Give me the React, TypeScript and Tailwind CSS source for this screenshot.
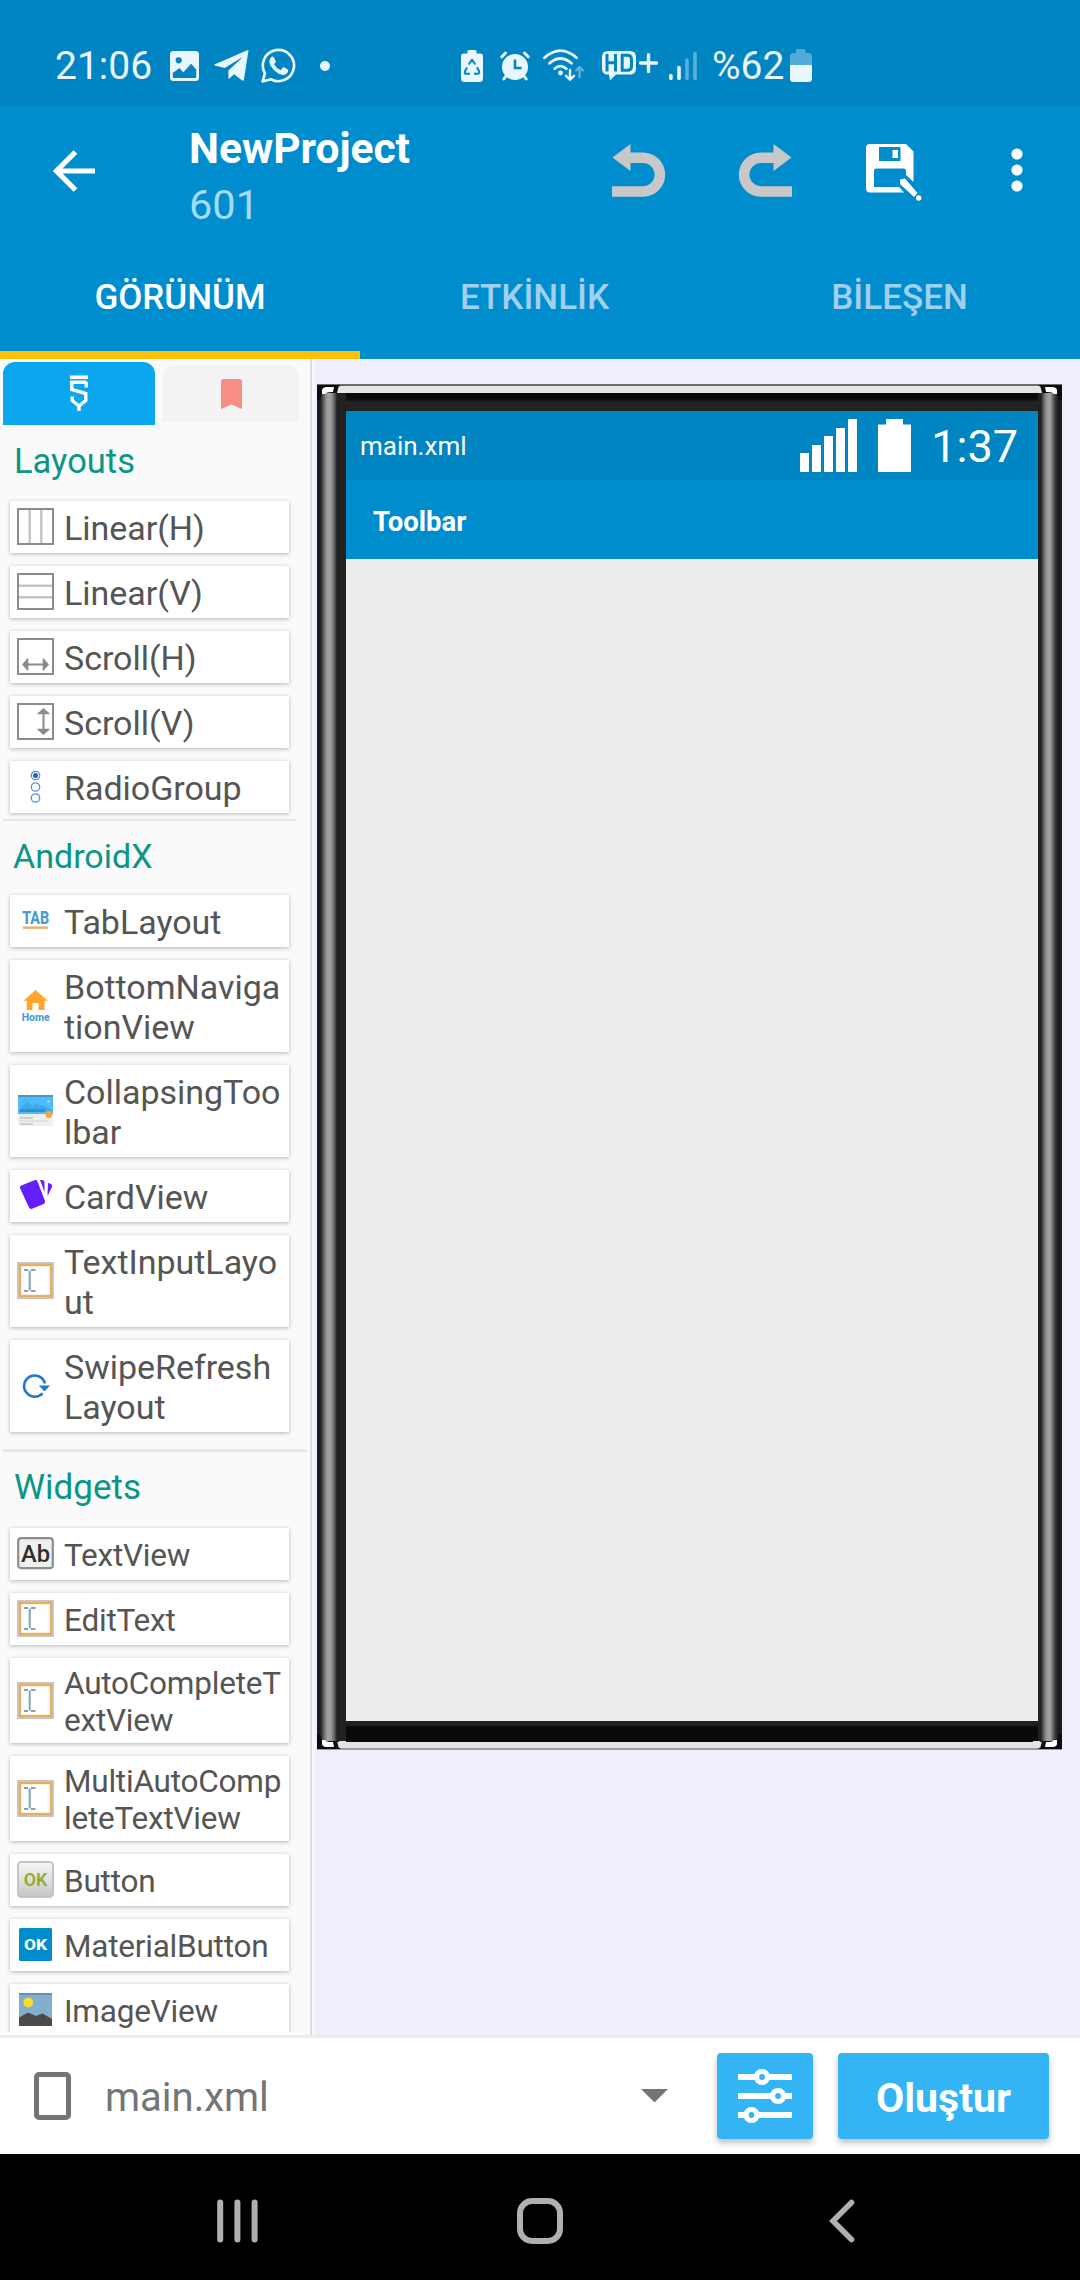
import React from "react";
import type { ReactNode } from "react";

/* ---------- status bar icons ---------- */

const PictureIcon = () => (
  <svg width="29" height="30" viewBox="0 0 29 30">
    <path fillRule="evenodd" fill="#eaf6fd" d="M3.500 0H25.500Q29 0 29 3.500V26.500Q29 30 25.500 30H3.500Q0 30 0 26.500V3.500Q0 0 3.500 0ZM8.700 6.200A3.100 3.100 0 1 0 8.700 12.400A3.100 3.100 0 1 0 8.700 6.200ZM2.800 22V26.200Q2.800 27 3.600 27H25.400Q26.200 27 26.200 26.200V18.500L21 12.800L13.300 21.500L9.500 17Z" />
  </svg>
);

const TelegramIcon = () => (
  <svg width="35" height="31" viewBox="0 0 35 31">
    <path fill="#eaf6fd" d="M34.500 .5L29.800 30.200Q29.300 31 28.300 30.400L20 24.200L15.400 28.600Q14.500 29.200 14.400 28V20.600L27.300 8.400Q27.900 7.600 26.900 8L10.800 18L1 15.500Q-.3 14.900 1 14.200L33.300 .2Q34.400 -.2 34.500 .5Z" />
  </svg>
);

const WhatsappIcon = () => (
  <svg width="35" height="35" viewBox="0 0 35 35">
    <path d="M1.600 33.500L3.900 25.300A15.600 15.600 0 1 1 9.900 31.200Z" fill="none" stroke="#eaf6fd" strokeWidth="2.700" strokeLinejoin="round" />
    <path fill="#eaf6fd" d="M10 9.300Q11.600 7.800 12.900 9.200L14.800 13.300Q15 14.500 13.100 16.300Q15.200 20.300 19.400 22.100Q20.100 22.200 21.900 19.600Q22.600 19.100 23.500 19.600L27 21.500Q27.500 22 27 23.700Q25.800 26.800 21.900 26.900Q17.500 26.400 13.600 22.700Q8.700 17.600 8.400 13.700Q8.500 11 10 9.300Z" />
  </svg>
);

const RecycleBatteryIcon = () => (
  <svg width="22" height="32" viewBox="0 0 22 32">
    <path fill="#eaf6fd" d="M6.500 1.500Q6.500 0 8 0H14Q15.500 0 15.500 1.500V3.500H19Q22 3.500 22 6.500V28.500Q22 32 18.500 32H3.500Q0 32 0 28.500V6.500Q0 3.500 3 3.500H6.500Z" />
    <path d="M7.700 14.500L11 9.700L14.300 14.500M16 17.200L18.200 21.500Q18.600 23.800 16.500 23.800H13M9 23.800H5Q3.200 23.500 4 21.300L6 17.500" fill="none" stroke="#0084c2" strokeWidth="2" strokeLinejoin="round" />
  </svg>
);

const AlarmIcon = () => (
  <svg width="30" height="30" viewBox="0 0 30 30">
    <g stroke="#eaf6fd" strokeWidth="3" strokeLinecap="round">
      <path d="M1.800 5.800L5.500 2M28.200 5.800L24.500 2M3.800 28L7 23.500M26.200 28L23 23.500" />
    </g>
    <circle cx="15" cy="16" r="13" fill="#eaf6fd" />
    <path d="M15 8.500V17H21.500" fill="none" stroke="#0084c2" strokeWidth="2.600" />
  </svg>
);

const WifiIcon = () => (
  <svg width="42" height="33" viewBox="0 0 42 33">
    <g fill="none" stroke="#eaf6fd" strokeWidth="2.800" strokeLinecap="round">
      <path d="M1.500 8.800Q17.500 -5.500 33.500 8.800" />
      <path d="M6.500 14.300Q17.500 4.800 28.500 14.300" />
      <path d="M11.600 19.700Q17.500 14.600 23.400 19.700" />
      <path d="M27 21V30M23 26.800L27 30.600L31 26.800" strokeWidth="2.400" />
    </g>
    <circle cx="17.500" cy="24" r="2.400" fill="#eaf6fd" />
    <path d="M36.500 29V19M32.500 22L36.500 18.200L40.500 22" fill="none" stroke="#5fb3dc" strokeWidth="2.400" />
  </svg>
);

const HdIcon = () => (
  <svg width="56" height="32" viewBox="0 0 56 32">
    <path fill="#eaf6fd" d="M6 1H28Q34 1 34 7V18.500Q34 24.500 28 24.500H14L8 30.500L7 24.500H6Q0 24.500 0 18.500V7Q0 1 6 1Z" />
    <g fill="none" stroke="#0084c2" strokeWidth="3">
      <path d="M5 4V21.500M13.500 4V21.500M5 12.700H13.500" />
      <path d="M20.200 5.200H25.500Q29.500 5.200 29.500 9.500V16Q29.500 20.300 25.500 20.300H20.200Z" />
    </g>
    <path d="M38.500 13H54.500M46.500 4.800V21.500" stroke="#eaf6fd" strokeWidth="3.400" strokeLinecap="round" />
  </svg>
);

const CellIcon = () => (
  <svg width="28" height="30" viewBox="0 0 28 30">
    <g strokeWidth="3.600" strokeLinecap="round">
      <path d="M1.900 24.500V27.500M10 16.500V27.500" stroke="#eaf6fd" />
      <path d="M18 9V27.500M26 2.500V27.500" stroke="#59b0da" />
    </g>
  </svg>
);

const BatteryIcon = () => (
  <svg width="22" height="33" viewBox="0 0 22 33">
    <path fill="#55abd7" d="M6 1.500Q6 0 7.500 0H14Q15.500 0 15.500 1.500V4H19Q22 4.500 22 7V17H0V7Q0 4.500 3 4H6Z" />
    <path fill="#eaf6fd" d="M0 16H22V29.500Q22 33 18.500 33H3.500Q0 33 0 29.500Z" />
  </svg>
);

/* ---------- toolbar icons ---------- */

const UndoIcon = ({ flip = false }: { flip?: boolean }) => (
  <svg width="54" height="54" viewBox="0 0 54 54" className={flip ? "-scale-x-100" : ""}>
    <path d="M0 47.500H31A16.900 16.900 0 0 0 31 13.700H17" fill="none" stroke="#c8c8c8" strokeWidth="10.600" />
    <path d="M.5 13.500L18.500 0V27Z" fill="#c8c8c8" />
  </svg>
);

const SaveIcon = () => (
  <svg width="56" height="57" viewBox="0 0 56 57">
    <path fillRule="evenodd" fill="#fff" d="M4 0H40L47.500 7.500V38L40 31V27Q40 24.500 37.500 24.500H10.500Q8 24.500 8 27V43H33L38 48.500H4Q0 48.500 0 44.500V4Q0 0 4 0ZM13 3V17H34.500V3Z" />
    <rect x="26.500" y="6" width="5.500" height="8" fill="#fff" />
    <path d="M34 35.500L39 34.500L51.500 49L48 53L34 40Z" fill="#fff" />
    <circle cx="52.700" cy="54" r="2.700" fill="#fff" />
  </svg>
);

/* ---------- palette icons ---------- */

const Frame = ({ children }: { children?: ReactNode }) => (
  <svg width="37" height="37" viewBox="0 0 37 37">
    <rect x="1" y="1" width="35" height="35" fill="#fff" stroke="#8b8b8b" strokeWidth="2" />
    {children}
  </svg>
);

const LinearH = () => (
  <Frame>
    <path d="M12.700 2V35M24.300 2V35" stroke="#c4c4c4" strokeWidth="2.400" />
  </Frame>
);
const LinearV = () => (
  <Frame>
    <path d="M2 12.700H35M2 24.300H35" stroke="#c4c4c4" strokeWidth="2.400" />
  </Frame>
);
const ScrollH = () => (
  <Frame>
    <path d="M9 26.500H28" stroke="#8b8b8b" strokeWidth="2" />
    <path d="M5 26.500L10 21V32ZM32 26.500L27 21V32Z" fill="#8b8b8b" />
    <path d="M10.500 20.500V32.500M26.500 20.500V32.500" stroke="#8b8b8b" strokeWidth="1.600" />
  </Frame>
);
const ScrollV = () => (
  <Frame>
    <path d="M26.500 9V28" stroke="#8b8b8b" strokeWidth="2" />
    <path d="M26.500 5L21 10H32ZM26.500 32L21 27H32Z" fill="#8b8b8b" />
    <path d="M20.500 10.500H32.500M20.500 26.500H32.500" stroke="#8b8b8b" strokeWidth="1.600" />
  </Frame>
);
const RadioIcon = () => (
  <svg width="37" height="37" viewBox="0 0 37 37">
    <g fill="none" stroke="#5b93d4" strokeWidth="1.300">
      <circle cx="18.500" cy="7.500" r="4.200" />
      <circle cx="18.500" cy="19" r="4.200" />
      <circle cx="18.500" cy="30" r="4.200" />
    </g>
    <circle cx="18.500" cy="7.500" r="2.500" fill="#1565c0" />
  </svg>
);
const TabIcon = () => (
  <svg width="37" height="37" viewBox="0 0 37 37">
    <text x="18.700" y="22" textAnchor="middle" textLength="27" lengthAdjust="spacingAndGlyphs" fontFamily="Roboto, sans-serif" fontWeight="800" fontSize="17.500" fill="#4b9bd3">TAB</text>
    <rect x="6" y="24.500" width="25" height="2.300" fill="#e8ae62" />
  </svg>
);
const HomeIcon = () => (
  <svg width="37" height="37" viewBox="0 0 37 37">
    <path fill="#ffa62b" d="M18.500 3L31 13.700H27.500V23H21.500V16H15.500V23H9.800V13.700H6.500Z" />
    <text x="18.700" y="33.500" textAnchor="middle" textLength="28" lengthAdjust="spacingAndGlyphs" fontFamily="Roboto, sans-serif" fontWeight="800" fontSize="11.500" fill="#4b9bd3">Home</text>
  </svg>
);
const CollapsingIcon = () => (
  <svg width="37" height="37" viewBox="0 0 37 37">
    <rect x="1" y="22" width="35" height="12" fill="#efefef" />
    <rect x="1" y="3" width="35" height="19" fill="#4cbcfc" />
    <rect x="1" y="3" width="35" height="2" fill="#4a96c9" />
    <path d="M2 18L10 9.500L15 14L19 11.500L27 14L35 18V20H2Z" fill="#3fa9ee" />
    <circle cx="31.500" cy="9.500" r="1.600" fill="#9adcf8" />
    <rect x="3" y="17" width="25" height="3" fill="#3190d2" />
    <path d="M3 26H16M3 32H16" stroke="#c5c5c5" strokeWidth="1.500" />
    <path d="M3 29H31" stroke="#dadada" strokeWidth="1.300" />
    <circle cx="31.800" cy="22.500" r="3.400" fill="#faa632" />
  </svg>
);
const CardIcon = () => (
  <svg width="37" height="37" viewBox="0 0 37 37">
    <path fill="#651fff" d="M4.300 8.500L18 3Q19.600 2.600 20.300 4L28 24Q28.500 26 26.800 27L15 31.800Q13 32.500 12 30.500L3 11Q2.500 9.300 4.300 8.500ZM23 3H25Q27.500 3.200 27.500 5.500V15ZM31 6Q35.800 6.500 35 10L30.500 19Z" />
  </svg>
);
const InputIcon = () => (
  <svg width="37" height="37" viewBox="0 0 37 37">
    <rect width="37" height="37" fill="#c9c5c1" />
    <rect x="3" y="3" width="31" height="31" fill="#fff" stroke="#e8ae62" strokeWidth="2.400" />
    <path d="M7 8H11M14 8H18.500M7 29H11M14 29H18.500M12.700 8.500V28.500" stroke="#7ba3c4" strokeWidth="2" />
  </svg>
);
const RefreshIcon = () => (
  <svg width="37" height="37" viewBox="0 0 37 37">
    <path d="M25.500 26.300A10.600 10.600 0 1 1 28 16.500" fill="none" stroke="#2478cc" strokeWidth="2.600" />
    <path d="M21.800 18.500H33L27.500 24.500Z" fill="#2478cc" />
  </svg>
);
const AbIcon = () => (
  <svg width="37" height="37" viewBox="0 0 37 37">
    <rect x="1.200" y="3.200" width="34.600" height="30" rx="3" fill="#efefef" stroke="#8d8d8d" strokeWidth="2.200" />
    <text x="18.500" y="27" textAnchor="middle" textLength="29" lengthAdjust="spacingAndGlyphs" fontFamily="Roboto, sans-serif" fontWeight="500" fontSize="24" fill="#2f2f2f">Ab</text>
  </svg>
);
const OkIcon = () => (
  <svg width="37" height="37" viewBox="0 0 37 37">
    <defs>
      <linearGradient id="ok" x1="0" y1="0" x2="0" y2="1">
        <stop offset="0" stopColor="#f8f8f8" />
        <stop offset="1" stopColor="#c6c6c6" />
      </linearGradient>
    </defs>
    <rect x="1" y="1" width="35" height="35" rx="3.500" fill="url(#ok)" stroke="#c4c4c4" strokeWidth="2" />
    <text x="18.500" y="25" textAnchor="middle" textLength="23.500" lengthAdjust="spacingAndGlyphs" fontFamily="Roboto, sans-serif" fontWeight="600" fontSize="19" fill="#93aa2f">OK</text>
  </svg>
);
const MaterialOkIcon = () => (
  <svg width="37" height="37" viewBox="0 0 37 37">
    <rect x="2" y="2" width="33" height="33" rx="1.500" fill="#008dcd" />
    <text x="18.500" y="24" textAnchor="middle" textLength="23" lengthAdjust="spacingAndGlyphs" fontFamily="Roboto, sans-serif" fontWeight="800" fontSize="14" fill="#fff">OK</text>
  </svg>
);
const ImageViewIcon = () => (
  <svg width="37" height="37" viewBox="0 0 37 37">
    <rect x="2" y="2" width="33" height="33" fill="#82aed0" />
    <rect x="2" y="2" width="33" height="2" fill="#6590b3" />
    <circle cx="11.300" cy="11.500" r="4.800" fill="#fddd2e" />
    <path d="M2 26.500L11 21.500L19 25L25.500 22.500L35 28V35H2Z" fill="#4b4b4b" />
  </svg>
);

/* ---------- palette ---------- */

type Item = { icon: ReactNode; lines: string[] };

const layouts: Item[] = [
  { icon: <LinearH />, lines: ["Linear(H)"] },
  { icon: <LinearV />, lines: ["Linear(V)"] },
  { icon: <ScrollH />, lines: ["Scroll(H)"] },
  { icon: <ScrollV />, lines: ["Scroll(V)"] },
  { icon: <RadioIcon />, lines: ["RadioGroup"] },
];

const androidX: Item[] = [
  { icon: <TabIcon />, lines: ["TabLayout"] },
  { icon: <HomeIcon />, lines: ["BottomNaviga", "tionView"] },
  { icon: <CollapsingIcon />, lines: ["CollapsingToo", "lbar"] },
  { icon: <CardIcon />, lines: ["CardView"] },
  { icon: <InputIcon />, lines: ["TextInputLayo", "ut"] },
  { icon: <RefreshIcon />, lines: ["SwipeRefresh", "Layout"] },
];

const widgets: Item[] = [
  { icon: <AbIcon />, lines: ["TextView"] },
  { icon: <InputIcon />, lines: ["EditText"] },
  { icon: <InputIcon />, lines: ["AutoCompleteT", "extView"] },
  { icon: <InputIcon />, lines: ["MultiAutoComp", "leteTextView"] },
  { icon: <OkIcon />, lines: ["Button"] },
  { icon: <MaterialOkIcon />, lines: ["MaterialButton"] },
  { icon: <ImageViewIcon />, lines: ["ImageView"] },
];

function Palette({ items, small = false }: { items: Item[]; small?: boolean }) {
  return (
    <ul className="ml-[10px] flex w-[279px] shrink-0 flex-col gap-[13px]">
      {items.map(({ icon, lines }) => {
        const height = lines.length === 1 ? "h-[52px]" : small ? "h-[85px]" : "h-[92px]";
        return (
          <li
            key={lines[0]}
            className={`flex items-center bg-white pl-[7px] shadow-[0_1px_4px_rgba(0,0,0,0.28)] ${height}`}
          >
            <span className="w-[47px] shrink-0 pb-[1px]">{icon}</span>
            <span
              className={`whitespace-nowrap text-[#555] ${
                small
                  ? "pt-[3px] text-[31.500px] leading-[37.500px] tracking-[-0.22px]"
                  : "pt-[2px] text-[34px] leading-[40px] tracking-[-0.03px]"
              }`}
            >
              {lines.map((line) => (
                <span key={line} className="block">
                  {line}
                </span>
              ))}
            </span>
          </li>
        );
      })}
    </ul>
  );
}

function Sidebar() {
  return (
    <aside className="flex w-[315px] shrink-0 flex-col overflow-hidden border-r-[3px] border-[#f7f7fb] bg-[#fafafa]">
      <div className="flex h-full flex-col overflow-hidden border-r-2 border-[#dcdcdc] pb-[3px]">
        <div className="flex min-h-0 flex-1 flex-col overflow-hidden">
          <div className="flex shrink-0 items-center gap-[8px] pt-[3px] pl-[3px]">
            <div className="flex h-[63px] w-[152px] items-center justify-center rounded-t-[12px] bg-[#0aa7ee]">
              <svg width="19" height="36" viewBox="0 0 19 36" className="mb-[1px]">
                <path
                  d="M0 2.200H18M0 7.300H16.500M1.800 7V14.500L15.800 18.500V25.500L9 31L2.200 25.500V21.500M16.300 7V12.500M9 30V36"
                  fill="none"
                  stroke="#fff"
                  strokeWidth="3.400"
                />
              </svg>
            </div>
            <div className="flex h-[57px] w-[136px] items-center justify-center rounded-t-[12px] bg-[#f3f3f3]">
              <svg width="21" height="30" viewBox="0 0 21 30">
                <path d="M2.500 0H18.500Q21 0 21 2.500V30L10.500 25.500L0 30V2.500Q0 0 2.500 0Z" fill="#f88d86" />
              </svg>
            </div>
          </div>
          <h2 className="h-[76px] shrink-0 pt-[16px] pl-[14px] text-[34.500px] leading-[40px] text-[#0b9586]">Layouts</h2>
          <Palette items={layouts} />
          <div className="mt-[6px] ml-[3px] h-[2px] w-[293px] shrink-0 bg-[#e6e6e6]" />
          <h2 className="h-[74px] shrink-0 pt-[15px] pl-[13px] text-[34px] leading-[40px] text-[#0b9586]">AndroidX</h2>
          <Palette items={androidX} />
          <div className="mt-[17px] ml-[3px] h-[3px] w-[304px] shrink-0 bg-[#e6e6e6]" />
          <h2 className="h-[76px] shrink-0 pt-[16px] pl-[14px] text-[35px] leading-[40px] text-[#0b9586]">Widgets</h2>
          <Palette items={widgets} small />
        </div>
      </div>
    </aside>
  );
}

/* ---------- device preview ---------- */

const Corner = ({ className }: { className: string }) => (
  <svg width="29" height="16" viewBox="0 0 29 16" className={`absolute ${className}`}>
    <path d="M0 1H24L20 4V9H5L3 16H0Z" fill="#0c0c0c" />
    <path d="M5 10V6Q5.500 3.500 9 3H17L16 8Q10 7.500 8 10Z" fill="#fff" />
    <path d="M18 3H21.500L20 9H17Z" fill="#111" />
    <path d="M29 3H25Q23.500 4 22 9H29Z" fill="#e4e4e4" />
  </svg>
);

function Device() {
  return (
    <div className="relative flex h-[1366px] w-[745px] flex-col">
      <div className="h-[2px] bg-[#6c6c6c]" />
      <div className="h-[7px] bg-[#e6e6e6]" />
      <div className="flex flex-1">
        <div className="w-[29px] bg-[linear-gradient(to_right,#1b1b1b_0,#1b1b1b_3px,#3c3c3c_5px,#7d7d7d_8px,#a3a3a3_11px,#9a9a9a_14px,#6a6a6a_17px,#222_20px,#222)]" />
        <div className="flex flex-1 flex-col">
          <div className="h-[18px] bg-[linear-gradient(#0a0a0a_0,#0a0a0a_6px,#222_9px)]" />
          <div className="flex h-[69px] items-center bg-[#0084c2] pr-[20px] pl-[14px] text-white">
            <span className="text-[26px] leading-[32px]">main.xml</span>
            <svg width="57" height="53" viewBox="0 0 57 53" className="ml-auto" fill="#fff">
              <rect x="0" y="34" width="9" height="19" />
              <rect x="12" y="26" width="9" height="27" />
              <rect x="24" y="17" width="9" height="36" />
              <rect x="36" y="9" width="9" height="44" />
              <rect x="48" y="0" width="9" height="53" />
            </svg>
            <svg width="33" height="53" viewBox="0 0 33 53" className="ml-[21px]" fill="#fff">
              <path d="M8 0H25V5.500H33V53H0V5.500H8Z" />
            </svg>
            <span className="ml-[20px] pt-[3px] text-[45px] leading-[54px]">1:37</span>
          </div>
          <div className="flex h-[79px] items-center bg-[#008dcd] pt-[4px] pl-[27px] text-[27.500px] font-bold text-white">
            Toolbar
          </div>
          <div className="flex-1 bg-[#ededed]" />
          <div className="h-[21px] bg-[linear-gradient(#1f2222_0,#1f2222_4px,#090b0b_6px)]" />
        </div>
        <div className="w-[24px] bg-[linear-gradient(to_right,#222_0,#222_3px,#6a6a6a_6px,#9a9a9a_9px,#a3a3a3_12px,#7d7d7d_14px,#3c3c3c_17px,#1b1b1b_20px,#1b1b1b)]" />
      </div>
      <div className="h-[6px] bg-[#e4e4e4]" />
      <div className="h-[2px] bg-[#9c9c9e]" />
      <Corner className="top-0 left-0" />
      <Corner className="top-0 right-0 -scale-x-100" />
      <Corner className="bottom-0 left-0 -scale-y-100" />
      <Corner className="right-0 bottom-0 -scale-100" />
    </div>
  );
}

/* ---------- page ---------- */

export default function App() {
  return (
    <div className="flex h-[2280px] w-[1080px] flex-col overflow-hidden bg-white font-['Roboto',sans-serif]">
      <div className="flex h-[107px] shrink-0 items-center bg-[#0084c2] pt-[24px] pl-[55px] text-[39px] leading-[46px] text-[#eaf6fd]">
        <span className="w-[115px]">21:06</span>
        <PictureIcon />
        <span className="ml-[15px]"><TelegramIcon /></span>
        <span className="ml-[12px]"><WhatsappIcon /></span>
        <span className="ml-[24px] size-[10px] rounded-full bg-[#eaf6fd]" />
        <span className="ml-[131px]"><RecycleBatteryIcon /></span>
        <span className="ml-[17px]"><AlarmIcon /></span>
        <span className="ml-[13px]"><WifiIcon /></span>
        <span className="ml-[17px]"><HdIcon /></span>
        <span className="ml-[11px]"><CellIcon /></span>
        <span className="ml-[15px] w-[78px]">%62</span>
        <BatteryIcon />
      </div>

      <header className="flex h-[252px] shrink-0 flex-col bg-[#008dcd] text-white">
        <div className="flex h-[128px] items-center pl-[53px]">
          <svg width="42" height="42" viewBox="0 0 42 42" className="shrink-0">
            <path d="M22.500 2L3.500 21L22.500 40M3 21H42" fill="none" stroke="#fff" strokeWidth="5.200" />
          </svg>
          <div className="ml-[94px] w-[423px] pt-[12px]">
            <h1 className="text-[42.500px] leading-[56px] font-bold">NewProject</h1>
            <p className="text-[41.500px] leading-[56px] text-[#a4dcf6]">601</p>
          </div>
          <UndoIcon />
          <span className="ml-[72px]"><UndoIcon flip /></span>
          <span className="ml-[74px] pt-[3px]"><SaveIcon /></span>
          <svg width="12" height="44" viewBox="0 0 12 44" className="mb-[2px] ml-[89px]" fill="#fff">
            <circle cx="6" cy="6" r="5.600" />
            <circle cx="6" cy="22" r="5.600" />
            <circle cx="6" cy="38" r="5.600" />
          </svg>
        </div>
        <nav className="grid flex-1 grid-cols-3 text-center text-[35px] leading-[42px] font-medium">
          <div className="border-b-[8px] border-[#ffc107] pt-[42px]">GÖRÜNÜM</div>
          <div className="pt-[42px] pr-[11px] text-[#a1cfee]">ETKİNLİK</div>
          <div className="pt-[42px] pr-[1px] text-[#a1cfee]">BİLEŞEN</div>
        </nav>
      </header>

      <div className="flex h-[1676px] shrink-0 overflow-hidden">
        <Sidebar />
        <main className="flex-1 bg-[#f0effe] pt-[25px] pl-[2px]">
          <Device />
        </main>
      </div>

      <div className="flex h-[119px] shrink-0 items-center border-t-[3px] border-[#ececec] bg-white pl-[34px]">
        <span className="h-[48px] w-[37px] rounded-[5px] border-[5px] border-[#757575]" />
        <span className="ml-[34px] w-[536px] pt-[4px] text-[40px] leading-[48px] text-[#757575]">main.xml</span>
        <svg width="27" height="14" viewBox="0 0 27 14">
          <path d="M0 0H27L13.500 13.500Z" fill="#757575" />
        </svg>
        <button className="ml-[49px] flex h-[86px] w-[96px] items-center justify-center rounded-[4px] bg-[#33b5f5] shadow-[0_4px_6px_rgba(0,0,0,0.25)]">
          <svg width="54" height="56" viewBox="0 0 54 56">
            <path d="M0 9H54M0 28H54M0 47H54" stroke="#fff" strokeWidth="6" />
            <g fill="#33b5f5" stroke="#fff" strokeWidth="5.200">
              <circle cx="24" cy="9" r="5.500" />
              <circle cx="40" cy="28" r="5.500" />
              <circle cx="13.500" cy="47" r="5.500" />
            </g>
          </svg>
        </button>
        <button className="ml-[25px] flex h-[86px] w-[211px] items-center justify-center rounded-[4px] bg-[#33b5f5] pt-[6px] text-[41px] font-bold text-white shadow-[0_4px_6px_rgba(0,0,0,0.25)]">
          Oluştur
        </button>
      </div>

      <footer className="flex flex-1 items-center bg-black pt-[7px] pl-[217px]">
        <svg width="41" height="44" viewBox="0 0 41 44">
          <path d="M3.200 3.500V40.500M20.400 3.500V40.500M37.600 3.500V40.500" stroke="#b0b0b0" strokeWidth="6" strokeLinecap="round" />
        </svg>
        <span className="ml-[259px] size-[46px] rounded-[15px] border-[6px] border-[#b0b0b0]" />
        <svg width="26" height="44" viewBox="0 0 26 44" className="ml-[266px]">
          <path d="M22.500 3.500L4 22L22.500 40.500" fill="none" stroke="#b0b0b0" strokeWidth="5.600" strokeLinecap="round" />
        </svg>
      </footer>
    </div>
  );
}
